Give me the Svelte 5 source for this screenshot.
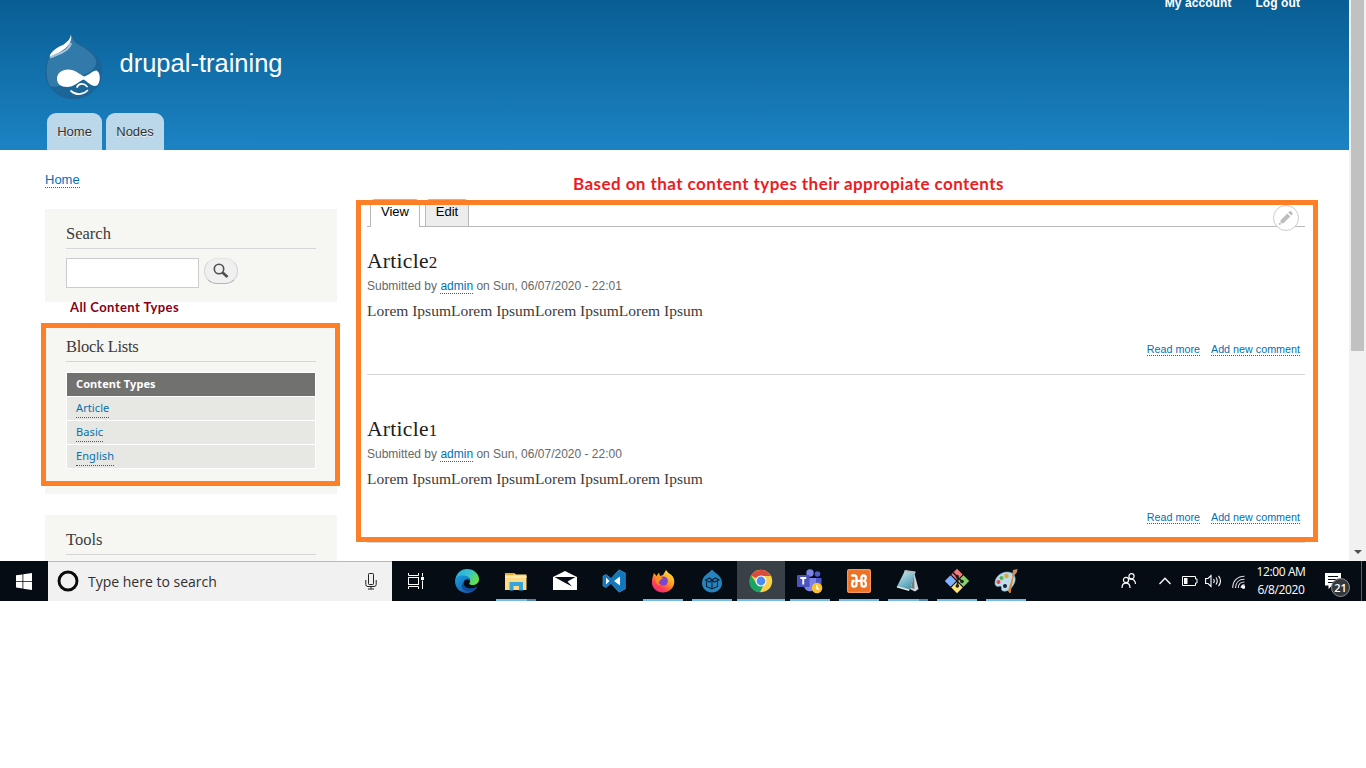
<script>
  const types = ['Article', 'Basic', 'English'];
  const articles = [
    { title: 'Article', num: '2', time: '22:01' },
    { title: 'Article', num: '1', time: '22:00' }
  ];
  const apps = [
    { id: 'tasks' },
    { id: 'edge' },
    { id: 'files', open: true, multi: true },
    { id: 'mail' },
    { id: 'code' },
    { id: 'firefox', open: true },
    { id: 'drupal', open: true },
    { id: 'chrome', open: true, active: true },
    { id: 'teams', open: true },
    { id: 'xampp', open: true },
    { id: 'notes', open: true, multi: true },
    { id: 'git', open: true },
    { id: 'paint', open: true }
  ];
</script>

<div class="screen">
  <div class="browser">
    <div class="page">
      <header>
        <nav class="account"><a href="#a">My account</a><a href="#b">Log out</a></nav>
        <div class="brand">
          <svg width="58" height="66" viewBox="0 0 58 66">
            <path d="M26.500 1C28.500 8 32.500 9 40.500 14C50.500 20 56.500 27 56.500 37C56.500 54 43.500 64.500 28.500 64.500C12.500 64.500 .5 53 .5 37C.5 27 5.500 18 14.500 13C22.500 9 25.500 6 26.500 1Z" fill="#1b6598" stroke="#27608c" stroke-width="1" />
            <path d="M26.500 2C28.500 9 32.500 10 39.500 14C48.500 20 52 25 51 30C49 38 38 41 28 46C19 51 11 54 5 52C0 43 0 27 8 19C13 13 23.500 11 26.500 2Z" fill="#327aaa" />
            <path d="M26 9C24 17 14 20 5 23.500" fill="none" stroke="#a8c7dc" stroke-width="2" />
            <path d="M26 .5C28 11 18 18 4.500 22.500C6 17 13 13 18 11C22 8 25 6 26 .5Z" fill="#fff" />
            <path d="M12 45C12 39 17 35.500 23 35.500C30 35.500 34 40 39 42.500C45 40.500 48 36.500 51 36.500C56.500 37.500 56 52 50 52C46 52 42 47.500 38.500 45.500C33 48 29 53 22 53C16 53 12 50 12 45Z" fill="#fff" />
            <path d="M32 53C34 49 39 49 42 52.500M26 57C31 61.500 38 61 42.500 56.500" fill="none" stroke="#fff" stroke-width="1.700" stroke-linecap="round" />
          </svg>
          <span class="site">drupal-training</span>
        </div>
        <nav class="menu"><a href="#h">Home</a><a href="#n">Nodes</a></nav>
      </header>

      <div class="columns">
        <aside>
          <div class="crumb"><a class="dot" href="#c">Home</a></div>
          <section class="block find">
            <h2>Search</h2>
            <div class="form">
              <span class="field"></span>
              <span class="go">
                <svg width="16" height="16" viewBox="0 0 16 16"><circle cx="6" cy="6" r="4.700" fill="none" stroke="#505050" stroke-width="1.600" /><path d="M9.500 9.500L14.500 14" stroke="#505050" stroke-width="2.800" /></svg>
              </span>
            </div>
          </section>
          <p class="note-types">All Content Types</p>
          <section class="block lists">
            <h2>Block Lists</h2>
            <div class="table">
              <div class="th">Content Types</div>
              {#each types as t}
                <div class="td"><a class="dot" href="#t">{t}</a></div>
              {/each}
            </div>
          </section>
          <section class="block tools"><h2>Tools</h2></section>
        </aside>

        <main>
          <p class="note-main">Based on that content types their appropiate contents</p>
          <div class="tabs">
            <span class="tab on">View</span><span class="tab">Edit</span>
          </div>
          {#each articles as a}
            <article>
              <h1>{a.title}<span class="num">{a.num}</span></h1>
              <p class="meta">Submitted by <a class="dot" href="#u">admin</a> on Sun, 06/07/2020 - {a.time}</p>
              <p class="text">Lorem IpsumLorem IpsumLorem IpsumLorem Ipsum</p>
              <p class="links"><a class="dot" href="#r">Read more</a><a class="dot" href="#d">Add new comment</a></p>
            </article>
          {/each}
        </main>
      </div>

      <div class="frame frame-side"></div>
      <div class="frame frame-main"></div>
      <span class="pencil">
        <svg width="16" height="16" viewBox="0 0 16 16" fill="#bebebe"><path d="M2.500 10.200L9.300 3.400L12.300 6.400L5.500 13.200H2.500Z" /><path d="M10.200 2.500L11.500 1.200C12.500 .4 15.200 3.100 14.500 4.200L13.200 5.500Z" /><path d="M.8 13H2.600V14.800H.8Z" /></svg>
      </span>
    </div>
    <div class="scroll">
      <span class="thumb"></span>
      <svg width="8" height="4" viewBox="0 0 8 4"><path d="M0 0H8L4 4Z" fill="#505050" /></svg>
    </div>
  </div>

  <div class="taskbar">
    <div class="start">
      <svg width="16" height="17" viewBox="0 0 16 17" fill="#fff"><path d="M0 2.300L6.500 1.400V8H0ZM7.300 1.300L16 0V8H7.300ZM0 8.800H6.500V15.500L0 14.600ZM7.300 8.800H16V17L7.300 15.700Z" /></svg>
    </div>
    <div class="search">
      <svg width="22" height="22" viewBox="0 0 22 22"><circle cx="11" cy="11" r="9" fill="none" stroke="#0a0a0a" stroke-width="2.900" /></svg>
      <span>Type here to search</span>
      <svg class="mic" width="12" height="17" viewBox="0 0 12 17" fill="none" stroke="#222"><rect x="3.500" y=".5" width="5" height="11" rx=".8" /><path d="M.8 7V11.500Q.8 13.500 3 13.500H9Q11.200 13.500 11.200 11.500V7M6 13.500V16M3 16H9" /></svg>
    </div>
    {#each apps as app}
      <div class="app {app.id}" class:active={app.active} class:open={app.open} class:multi={app.multi}>
        {#if app.id === 'tasks'}
          <svg width="18" height="16" viewBox="0 0 18 16" fill="none" stroke="#fff" stroke-width="1"><path d="M1.500 0V2.500H11.500V0M1.500 16V13.500H11.500V16M15.500 0V3.500M15.500 7.500V16" /><rect x="1.500" y="4.500" width="10" height="7" /><path d="M14 5.500H17" stroke-width="3" /></svg>
        {:else if app.id === 'edge'}
          <svg width="24" height="24" viewBox="0 0 24 24">
            <defs>
              <linearGradient id="eg" x1="0" y1=".1" x2="1" y2=".5"><stop offset="0" stop-color="#29a8e0" /><stop offset=".55" stop-color="#35c2cf" /><stop offset="1" stop-color="#67e044" /></linearGradient>
              <linearGradient id="eb" x1="0" y1="0" x2="1" y2="1"><stop offset="0" stop-color="#1b9de2" /><stop offset="1" stop-color="#0d50a0" /></linearGradient>
            </defs>
            <path d="M0 12C1 4 6 0 12 0C19 0 24 5 24 10C24 14 21 16 17.500 16C14.500 16 13.500 15 15 13C16 9 12 7 8 7C4 7 1 9 0 12Z" fill="url(#eg)" />
            <path d="M0 12C1 8 4 6.500 8 6.500C12 6.500 15 9 15 12C13 9 9 10 8.500 14C8.500 19 15 22 22.500 17.500C20 22 16 24 12 24C5 24 0 19 0 12Z" fill="url(#eb)" />
            <path d="M8.600 13.500C8.500 19 15 21.500 22.500 17.500C19 23 12 24 8.500 20.500C6 18 6.500 15 8.600 13.500Z" fill="#12499a" />
          </svg>
        {:else if app.id === 'files'}
          <svg width="22" height="19" viewBox="0 0 22 19"><path d="M0 1H9L11 2.500H21.500V18H0Z" fill="#fbdc85" /><path d="M0 1H9V3H0Z" fill="#e8ae2a" /><path d="M0 4H21.500V6H0Z" fill="#ffe9a6" /><path d="M4.500 10H18V18.500H14V14H8.500V18.500H4.500Z" fill="#35a4dd" /></svg>
        {:else if app.id === 'mail'}
          <svg width="24" height="20" viewBox="0 0 24 20"><path d="M0 6L12 0L24 6V19H0Z" fill="#fff" /><path d="M1.500 6H22.500L14.500 10.500L19 15.500L10.500 11Z" fill="#060c14" /></svg>
        {:else if app.id === 'code'}
          <svg width="24" height="24" viewBox="0 0 24 24"><path d="M1 7L4 5.500L9 9.500L17 .8L23.300 4V20L17 23.200L9 14.500L4 18.500L1 17Z" fill="#1277bd" stroke="#4b91bd" stroke-width=".7" /><path d="M4 8.500L7.500 12L4 15.500ZM18 7.500V16.500L12 12Z" fill="#fff" /></svg>
        {:else if app.id === 'firefox'}
          <svg width="24" height="24" viewBox="0 0 24 24">
            <defs><linearGradient id="ff" x1=".85" y1="0" x2=".2" y2="1"><stop offset="0" stop-color="#ffe83d" /><stop offset=".45" stop-color="#ff9a23" /><stop offset=".75" stop-color="#ff4052" /><stop offset="1" stop-color="#ed2885" /></linearGradient></defs>
            <path d="M3 4L5.500 7L8 3.500L9 7L12 6L15 1L17.500 4C21.500 6 23.500 9 23.300 13C23 19 18 23.500 12 23.500C5 23.500 0 18 1 12C1 9 2 7 3 4Z" fill="url(#ff)" />
            <circle cx="12.300" cy="12" r="4.600" fill="#7a45d0" /><path d="M4 8C7 7 10 7 12 9.500C10 10 9 11 9 12C7 12 7 15 10 16C6 17 4 12 4 8Z" fill="#ff8c23" />
          </svg>
        {:else if app.id === 'drupal'}
          <svg width="22" height="24" viewBox="0 0 22 24"><path d="M11 .5C12.500 3.500 21 6 21 14C21 19.500 16.500 23.500 11 23.500C5.500 23.500 1 19.500 1 14C1 6 9.500 3.500 11 .5Z" fill="#2784bf" /><path d="M5.500 12.500V17.500L11 20L16.500 17.500V12.500M4.500 11L8.500 9L11 11L14.500 9L18 11L13.500 13L11 11L8.500 13ZM11 12V20" fill="none" stroke="#0b2236" stroke-width="1.100" /></svg>
        {:else if app.id === 'chrome'}
          <svg width="24" height="24" viewBox="0 0 24 24"><circle cx="12" cy="12" r="11.200" fill="#fcd04b" /><path d="M12 12L2.200 6.500C7-1.500 18-.5 21.900 7H12Z" fill="#db4b3e" /><path d="M2.200 6.500L7.700 15L14.500 16L11 23.200C1 22.500-2 13 2.200 6.500Z" fill="#1da362" /><circle cx="12" cy="12" r="5.500" fill="#fff" /><circle cx="12" cy="12" r="4.400" fill="#4c8bf5" /></svg>
        {:else if app.id === 'teams'}
          <svg width="26" height="25" viewBox="0 0 26 25"><circle cx="13" cy="4" r="3.700" fill="#7b83eb" /><circle cx="20.500" cy="5" r="2.800" fill="#5059c9" /><path d="M17 9H24.500V17Q22 20 17 18Z" fill="#5059c9" /><path d="M7 9H19V17C18 24 8 24 7 17Z" fill="#7b83eb" /><rect x="0" y="6" width="12.500" height="12" rx="1" fill="#4b53bc" /><path d="M3.300 9H9.200M6.250 9V15.500" stroke="#fff" stroke-width="1.900" /><circle cx="20" cy="19" r="5.300" fill="#fbc02d" /><path d="M20 16V19.500L22 20.500" fill="none" stroke="#fff" stroke-width="1.500" /></svg>
        {:else if app.id === 'xampp'}
          <svg width="24" height="24" viewBox="0 0 24 24"><rect width="24" height="24" rx="2" fill="#ee7226" /><rect x=".7" y=".7" width="22.600" height="22.600" rx="1.500" fill="none" stroke="#f6a06b" /><path d="M5 6.500H7.500Q9.500 6.500 9.500 9V11.800H14.500V9Q14.500 6.500 16.500 6.500Q18.800 6.500 18.800 9Q18.800 11 17 11.800Q19 12.800 19 15Q19 17.700 16.700 17.700Q14.500 17.700 14.500 15V11.800H9.500V15Q9.500 17.700 7.300 17.700Q5 17.700 5 15Q5 12.800 7 11.800H5.500" fill="none" stroke="#fff" stroke-width="2.300" stroke-linejoin="round" stroke-linecap="round" /></svg>
        {:else if app.id === 'notes'}
          <svg width="24" height="24" viewBox="0 0 24 24"><defs><linearGradient id="np" x1="0" y1="0" x2=".6" y2="1"><stop offset="0" stop-color="#d9edf0" /><stop offset="1" stop-color="#4299b0" /></linearGradient></defs><path d="M18 3L22.500 20L19 22.500L14 20Z" fill="#d4d8d8" /><path d="M18 5L18.500 20L15 19Z" fill="#6d7c80" /><path d="M9 1.500L19.500 3L13.500 21L1 17.500Z" fill="url(#np)" /><path d="M9 1L19.500 2.500L19 4.500L8 2.800Z" fill="#b9bfc0" /><path d="M1 17L13.500 20.500L13 22L.8 18.500Z" fill="#e8eeee" /></svg>
        {:else if app.id === 'git'}
          <svg width="26" height="26" viewBox="0 0 26 26"><path d="M13 .8L18.700 6.500L13 12.200L7.300 6.500Z" fill="#f37b7b" /><path d="M6.500 7.300L12.200 13L6.500 18.700L.8 13Z" fill="#80b3ff" /><path d="M19.500 7.300L25.200 13L19.500 18.700L13.800 13Z" fill="#8bd06a" /><path d="M13 13.800L18.700 19.500L13 25.200L7.300 19.500Z" fill="#ffe37a" /><path d="M8.500 4L13.500 9V18M13.500 9L18 13.500" fill="none" stroke="#1c211f" stroke-width="1.700" /><circle cx="13.300" cy="8.500" r="1.700" fill="#1c211f" /><circle cx="13.300" cy="18" r="1.800" fill="#1c211f" /><circle cx="18" cy="13.500" r="1.800" fill="#1c211f" /></svg>
        {:else}
          <svg width="26" height="26" viewBox="0 0 26 26"><path d="M2 15C2 9 8 4 14 4C20 4 23 8 22 13C20 20 15 24 10 23C7 22 10 18 7 18C4 19 2 18 2 15Z" fill="#bcdcec" stroke="#8cbad3" stroke-width=".6" /><circle cx="5.500" cy="14" r="2" fill="#e8483d" /><circle cx="8.500" cy="10" r="2" fill="#55b346" /><circle cx="13.500" cy="8" r="2.200" fill="#e6a52f" /><circle cx="12" cy="18" r="2" fill="#15213a" /><path d="M20.500 7L17 25L15.500 23Z" fill="#d98a3a" stroke="#d98a3a" /><path d="M19 8L20 2L24.500 1L24 4L21 8Z" fill="#c2916b" /></svg>
        {/if}
      </div>
    {/each}

    <div class="tray">
      <svg class="people" width="16" height="16" viewBox="0 0 16 16" fill="none" stroke="#fff" stroke-width="1.200"><circle cx="5" cy="7" r="2.600" /><path d="M1 15C1 8.500 9 8.500 9 15" /><circle cx="10.500" cy="3.300" r="2.600" /><path d="M8.500 6.500C12 5 14.500 8 14.500 11" /></svg>
      <svg class="up" width="12" height="8" viewBox="0 0 12 8" fill="none" stroke="#fff" stroke-width="1.300"><path d="M.5 7L6 1.200L11.500 7" /></svg>
      <svg class="battery" width="16" height="10" viewBox="0 0 16 10"><path d="M.5 .5H13.500V3H15V7H13.500V9.500H.5Z" fill="none" stroke="#fff" /><path d="M2 2H5.500V8H2Z" fill="#fff" /></svg>
      <svg class="sound" width="17" height="14" viewBox="0 0 17 14" fill="none" stroke="#fff" stroke-width="1.100"><path d="M.6 4.500H3L6 1.500V12.500L3 9.500H.6ZM8.500 5Q10 7 8.500 9M11 3.500Q13.500 7 11 10.500M13.500 1.800Q17.500 7 13.500 12.200" /></svg>
      <svg class="wifi" width="13" height="14" viewBox="0 0 13 14" fill="none" stroke="#fff" stroke-width="1.100"><path d="M.7 13C.7 6 5.500 1.200 12.500 1.200M3.500 13C3.500 7.500 7 4.200 12.500 4.200M6.300 13C6.300 9.500 8.500 7 12.500 7" opacity=".85" /><path d="M9.200 13C9.200 11 10.500 9.700 12.500 9.700" /><circle cx="11.500" cy="12" r="1.300" fill="#fff" /></svg>
      <div class="clock"><span class="time">12:00 AM</span><span class="date">6/8/2020</span></div>
      <div class="news">
        <svg width="16" height="16" viewBox="0 0 16 16"><path d="M0 0H16V12.500H7L3.500 16V12.500H0Z" fill="#fff" /><path d="M3 3.500H13M3 6.500H13M3 9.500H9" stroke="#060c14" /></svg>
        <span class="badge">21</span>
      </div>
      <span class="desk"></span>
    </div>
  </div>
</div>

<style>
  :global(body) { margin: 0; background: #fff; }
  .screen { width: 1366px; height: 768px; display: flex; flex-direction: column; overflow: hidden; background: #fff; font-family: "Liberation Sans", Arial, sans-serif; }
  .screen * { box-sizing: border-box; }
  h1, h2, p { margin: 0; font-weight: normal; }
  a { text-decoration: none; color: #0071b3; }
  svg { display: block; flex: none; }
  .dot { border-bottom: 1px dotted #0071b3; }
  .browser { height: 561px; display: flex; overflow: hidden; }
  .page { position: relative; width: 1349px; height: 561px; overflow: hidden; }
  header { height: 150px; background: linear-gradient(#085e94, #1c83c3); display: flex; flex-direction: column; }
  .account { height: 13px; display: flex; justify-content: flex-end; gap: 24px; padding-right: 49px; line-height: 15px; margin-top: -4px; margin-bottom: 4px; }
  .account a { color: #fff; font-size: 12px; font-weight: bold; letter-spacing: .08px; }
  .brand { height: 100px; display: flex; padding: 21px 0 0 45px; gap: 16.500px; }
  .site { color: #fff; font-size: 25.500px; line-height: 30px; margin-top: 14px; }
  .menu { height: 37px; display: flex; gap: 4px; padding-left: 47px; }
  .menu a { height: 37px; padding: 0 10.200px; border-radius: 9px 9px 0 0; background: #bbd8eb; color: #333; font-size: 13px; line-height: 37px; text-shadow: 0 1px #eee; }
  .columns { display: flex; }
  aside { width: 292px; margin-left: 45px; }
  .crumb { height: 59px; padding-top: 22px; font-size: 13px; line-height: 16px; }
  .block { background: #f6f6f2; padding: 0 21px; }
  .block h2 { height: 40px; border-bottom: 1px solid #d6d6d6; font: 16.500px/20px "Liberation Serif", Georgia, serif; color: #3b3b3b; letter-spacing: -.3px; }
  .find { height: 93px; }
  .find h2 { letter-spacing: 0; padding-top: 15px; }
  .form { display: flex; gap: 5px; padding-top: 9px; }
  .field { width: 133px; height: 30px; border: 1px solid #ccc; background: #fff; }
  .go { width: 34px; height: 26px; display: flex; align-items: center; justify-content: center; border: 1px solid; border-color: #e4e4e4 #d2d2d2 #b4b4b4; border-radius: 13px; background: #f0f0f0; padding-bottom: 1px; }
  .note-types { height: 21px; padding-left: 25px; font: bold 13px/11px Lato, Calibri, sans-serif; letter-spacing: .42px; color: #880015; white-space: nowrap; }
  .lists { height: 171px; }
  .lists h2 { height: 39px; padding-top: 14px; }
  .table { margin-top: 10px; border: 1px solid #fff; background: #fff; display: flex; flex-direction: column; gap: 1px; }
  .th, .td { height: 23px; padding-left: 9px; font: 11px/22px "Noto Sans", sans-serif; }
  .th { background: #717170; color: #fff; font-weight: bold; letter-spacing: .08px; }
  .td { background: #e7e7e3; }
  .td .dot { display: inline-block; line-height: 16px; height: 19px; padding-top: 1px; margin-top: 2px; vertical-align: top; letter-spacing: .1px; }
  .tools { margin-top: 21px; height: 80px; }
  .tools h2 { padding-top: 15px; letter-spacing: 0; }
  main { width: 938px; margin-left: 30px; }
  .note-main { height: 49px; padding: 24px 0 0 206px; font: bold 17px/20px Lato, Calibri, sans-serif; letter-spacing: .44px; color: #ed1c24; white-space: nowrap; }
  .tabs { height: 28px; padding-left: 3px; display: flex; gap: 5px; border-bottom: 1px solid #b8b8b8; }
  .tab { height: 27px; width: 44px; border: 1px solid #b8b8b8; border-bottom: 0; border-radius: 5px 5px 0 0; background: #ededed; color: #000; font-size: 13px; line-height: 23px; text-align: center; }
  .tab.on { width: 50px; height: 28px; background: #fff; }
  article { height: 168px; border-bottom: 1px solid #d3d7d9; padding-top: 40px; }
  article:nth-of-type(1) { height: 148px; padding-top: 20px; }
  h1 { height: 28px; font: 21.500px/28px "Liberation Serif", Georgia, serif; color: #202020; letter-spacing: .3px; }
  .num { font-size: 17px; }
  .meta { height: 22px; padding-top: 3px; font-size: 12px; line-height: 16px; color: #686868; }
  .text { height: 28px; padding-top: 3px; font: 15.500px/22px "Liberation Serif", Georgia, serif; color: #3b3b3b; white-space: nowrap; }
  .links { display: flex; justify-content: flex-end; gap: 11px; padding: 18px 5px 0 0; font-size: 10.750px; line-height: 12px; }
  .frame { position: absolute; border: 5px solid #ff7f27; }
  .frame-side { left: 41px; top: 323px; width: 299px; height: 163px; }
  .frame-main { left: 356px; top: 200px; width: 962px; height: 342px; }
  .pencil { position: absolute; left: 1273px; top: 205px; width: 26px; height: 26px; border: 1px solid #ccc; border-radius: 50%; background: #fff; display: flex; align-items: center; justify-content: center; }
  .scroll { width: 17px; background: #f1f1f1; display: flex; flex-direction: column; justify-content: space-between; align-items: center; padding-bottom: 7px; }
  .thumb { width: 13px; height: 351px; background: #c1c1c1; }
  .taskbar { height: 40px; background: #060c14; display: flex; }
  .start { width: 48px; display: flex; align-items: center; justify-content: center; }
  .search { width: 344px; background: #f1f1f1; border-top: 1px solid #b8b8b8; display: flex; align-items: center; padding: 0 15px 1px 9px; font: 14px/20px "Open Sans", "Segoe UI", sans-serif; color: #303030; }
  .search span { margin: 2px 0 0 9px; white-space: nowrap; }
  .mic { margin-left: auto; }
  .app { width: 48px; height: 40px; margin-right: 1px; display: flex; align-items: center; justify-content: center; }
  .tasks { margin-right: 3px; }
  .open { background: linear-gradient(#76b9ed, #76b9ed) 4px 38px / 40px 2px no-repeat; }
  .multi { background: linear-gradient(90deg, #76b9ed 31px, #4f86b3 31px) 4px 38px / 40px 2px no-repeat; }
  .active { background: linear-gradient(#76b9ed, #76b9ed) 0 38px / 48px 2px no-repeat #3a4047; }
  .tray { display: flex; align-items: center; margin-left: auto; color: #fff; }
  .up { margin-left: 22px; }
  .battery { margin-left: 11px; }
  .sound { margin-left: 7px; }
  .wifi { margin-left: 10px; margin-top: 2px; }
  .clock { width: 60px; margin-left: 6px; height: 40px; padding-top: 2px; display: flex; flex-direction: column; align-items: center; font: 12px/18px "Open Sans", "Segoe UI", sans-serif; white-space: nowrap; }
  .time, .date { letter-spacing: -.38px; }
  .news { position: relative; width: 16px; margin-left: 14px; }
  .badge { position: absolute; left: 6px; top: 5px; width: 19px; height: 19px; border-radius: 50%; border: 1px solid #8a8d90; background: #34383c; font: 600 11px/17px "Open Sans", "Segoe UI", sans-serif; text-align: center; }
  .desk { width: 1px; height: 40px; background: #5a5e63; margin: 0 4px 0 20px; }
</style>
